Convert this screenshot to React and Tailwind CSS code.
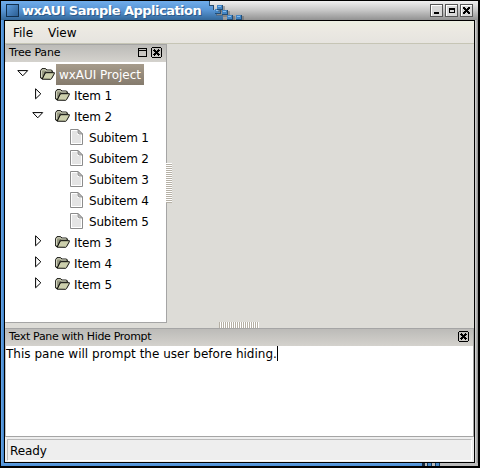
import React from "react";

const CloseIcon = () => (
  <svg width="11" height="11" viewBox="0 0 11 11" shapeRendering="crispEdges" className="block shrink-0">
    <path d="M1 0h9v1h1v9h-1v1H1v-1H0V1h1zM1 1v9h9V1z" fillRule="evenodd" />
    <path d="M2 3h1V2h1v1h1v1h1V3h1V2h1v1h1v1H8v1H7v1h1v1h1v1H8v1H7V8H6V7H5v1H4v1H3V8H2V7h1V6h1V5H3V4H2z" />
  </svg>
);

const MaxIcon = () => (
  <svg width="9" height="9" viewBox="0 0 9 9" shapeRendering="crispEdges" className="block shrink-0">
    <path d="M0 0h9v9H0zM1 3v5h7V3zM1 1v1h7V1z" fillRule="evenodd" />
  </svg>
);

const Folder = () => (
  <svg width="15" height="12" viewBox="0 0 15 12" className="block shrink-0">
    <path d="M.6 10V2.500L2 .6h3.500L7 2h4.500l1 1.200v1H5L2.500 11z" fill="#999b82" stroke="#1c1c18" />
    <path d="M1.500 9V3l1-1.200H5L6.500 3H11" fill="none" stroke="#e6e7d6" strokeWidth=".8" />
    <path d="M2.200 11.200L5 5.600l1-.9h8.400l-.2 1.200-2.700 4.800-.8.6z" fill="#cdd0ad" stroke="#11110e" />
  </svg>
);

const FileIcon = () => (
  <svg width="13" height="16" viewBox="0 0 13 16" className="block shrink-0">
    <path d="M.5.5H8L12.500 5v10.500H.5z" fill="#fff" stroke="#8c8c8c" />
    <path d="M2 2h5.500v4H11v8H2z" fill="#e4e4e4" />
    <path d="M8 .5L12.500 5H9.200L8 4z" fill="#bcbcbc" stroke="#858585" strokeWidth=".8" />
  </svg>
);

const Arrow = ({ open }) =>
  open ? (
    <svg width="12" height="8" viewBox="0 0 12 8" className="block">
      <path d="M.8 .6H10.700L5.750 5.800z" fill="#fff" stroke="#000" />
    </svg>
  ) : (
    <svg width="8" height="12" viewBox="0 0 8 12" className="block">
      <path d="M.6 .8V10.800L5.800 5.800z" fill="#fff" stroke="#000" />
    </svg>
  );

const Branch = ({ label, open, root }) => (
  <div className={`flex h-[21px] ${root ? "pl-3" : "pl-[27px]"}`}>
    <div className={`w-[23px] shrink-0 ${open ? "pt-[6px]" : "pt-[3px] pl-[3px]"}`}>
      <Arrow open={open} />
    </div>
    <div className="pt-[4px]">
      <Folder />
    </div>
    {root ? (
      <div className="ml-[1px] h-[21px] w-[88px] bg-linear-to-b from-[#a69b8b] to-[#857b6d] pl-[3px] leading-[23px] tracking-[-0.03px] text-white">
        {label}
      </div>
    ) : (
      <div className="pl-1 leading-[23px] tracking-[-0.15px]">{label}</div>
    )}
  </div>
);

const Leaf = ({ label }) => (
  <div className="flex h-[21px] items-start pl-[65px]">
    <div className="pt-[2px]"><FileIcon /></div>
    <span className="pl-[6px] leading-[23px] tracking-[-0.18px]">{label}</span>
  </div>
);

const WinButton = ({ children }) => (
  <div className="h-[13px] w-[13px] border border-[#555] bg-[#d8d8d8] shadow-[inset_1px_1px_0_#fff]">
    <svg width="11" height="11" viewBox="0 0 11 11" shapeRendering="crispEdges" className="block">
      {children}
    </svg>
  </div>
);

const pixels = [
  [65, 9], [67, 5], [72, 10], [77, 15], [86, 15],
];

export default function App() {
  return (
    <div className="flex h-[468px] w-[480px] flex-col overflow-hidden bg-black pt-px font-['DejaVu_Sans',sans-serif] text-[12px] whitespace-nowrap text-black">
      <div className="ml-px flex h-[19px] w-[477px] bg-linear-to-b from-[#f0f0f0] via-[#c6c6c6] to-[#929292]">
        <div className="flex h-[19px] w-[207px] items-center bg-linear-to-b from-[#70aceb] via-[#5794d3] to-[#346899] pl-[5px]">
          <div className="h-[13px] w-[13px] shrink-0 border border-[#12304e] bg-linear-to-br from-[#5c9bdc] to-[#2c5f93]" />
          <span className="pl-[3px] text-[13px] leading-[19px] font-bold tracking-[-0.52px] text-white [text-shadow:1px_1px_0_#2d5b8a]">
            wxAUI Sample Application
          </span>
        </div>
        <svg width="40" height="19" viewBox="58 1 40 19" shapeRendering="crispEdges" className="block">
          <defs>
            <linearGradient id="bar" x1="0" y1="1" x2="0" y2="20" gradientUnits="userSpaceOnUse">
              <stop offset="0" stopColor="#70aceb" />
              <stop offset=".5" stopColor="#5794d3" />
              <stop offset="1" stopColor="#346899" />
            </linearGradient>
          </defs>
          <path d="M58 1h2V5h4v5h3v5h6v5H58z" fill="url(#bar)" />
          <path d="M59.500 1V5.500h4V9.500" fill="none" stroke="#2a4d6e" />
          {pixels.map(([x, y]) => (
            <g key={`${x}-${y}`}>
              <rect x={x + 1} y={y + 1} width="7" height="6" fill="#555" opacity=".4" />
              <rect x={x} y={y} width="6" height="5" fill="#234f78" />
              <rect x={x} y={y} width="5" height="4" fill="#4385c4" />
              <rect x={x + 1} y={y + 1} width="3" height="1" fill="#86bdf0" />
            </g>
          ))}
        </svg>
        <div className="ml-auto flex items-start gap-[2px] pt-[3px] pr-[5px]">
          <WinButton><path d="M3 7h5v2H3z" /></WinButton>
          <WinButton><path d="M3 3h6v5H3zM4 5v2h4V5z" fillRule="evenodd" /></WinButton>
          <WinButton><path d="M2 2h2v1h1v1h1V3h1V2h2v2H8v1H7v1h1v1h1v2H7V8H6V7H5v1H4v1H2V7h1V6h1V5H3V4H2z" /></WinButton>
        </div>
      </div>

      <div className="flex h-[443px]">
        <div className="ml-px w-[3px] bg-linear-to-r from-[#6ba9e9] to-[#3d80c6]" />
        <div className="my-px ml-px flex w-[469px] flex-col bg-[#dddcd7]">
          <div className="flex h-[23px] gap-[15px] border-b border-[#c6c5b5] bg-linear-to-b from-[#edf0e2] via-[#ebe8e2] to-[#e6e4df] pl-2 leading-[25px]">
            <span>File</span>
            <span>View</span>
          </div>
          <div className="flex h-[279px]">
            <div className="flex w-[162px] flex-col border-r border-b border-l border-[#a5a5a5] border-l-[#c2c2c2]">
              <div className="flex h-[18px] items-start border-t border-[#a5a5a5] bg-linear-to-b from-[#bcbbb8] to-[#d4d2cd] pr-1 pl-[3px]">
                <span className="text-[11px] leading-[15px] tracking-[-0.2px]">Tree Pane</span>
                <div className="ml-auto flex items-center gap-1 pt-[2px]">
                  <MaxIcon />
                  <CloseIcon />
                </div>
              </div>
              <div className="-ml-px flex-1 bg-white pt-[2px]">
                <Branch root open label="wxAUI Project" />
                <Branch label="Item 1" />
                <Branch open label="Item 2" />
                <Leaf label="Subitem 1" />
                <Leaf label="Subitem 2" />
                <Leaf label="Subitem 3" />
                <Leaf label="Subitem 4" />
                <Leaf label="Subitem 5" />
                <Branch label="Item 3" />
                <Branch label="Item 4" />
                <Branch label="Item 5" />
              </div>
            </div>
            <div className="-ml-px mt-[119px] h-10 w-[6px] bg-[repeating-linear-gradient(to_bottom,#fff_0px,#fff_1px,#b5b0a5_1px,#b5b0a5_2px)]" />
          </div>
          <div className="flex h-[5px]">
            <div className="-mt-px ml-[214px] h-[6px] w-10 bg-[repeating-linear-gradient(to_right,#b5b0a5_0px,#b5b0a5_1px,#fff_1px,#fff_2px)]" />
          </div>
          <div className="flex h-[109px] flex-col border border-[#a5a5a5] border-l-[#c2c2c2]">
            <div className="flex h-[17px] shrink-0 items-start bg-linear-to-b from-[#bcbbb8] to-[#d4d2cd] pr-1 pl-[3px]">
              <span className="text-[11px] leading-[15px] tracking-[-0.33px]">Text Pane with Hide Prompt</span>
              <div className="ml-auto pt-[2px]"><CloseIcon /></div>
            </div>
            <div className="flex flex-1 items-start bg-white">
              <span className="leading-[16px] tracking-[0.02px]">This pane will prompt the user before hiding.</span>
              <span className="h-[15px] w-px bg-black" />
            </div>
          </div>
          <div className="flex h-[25px] bg-[#eee] pt-[2px] pr-[2px] pb-px pl-[2px]">
            <div className="w-full border border-[#bbb] border-r-white border-b-white pl-[2px] leading-[22px] tracking-[-0.1px]">Ready</div>
          </div>
        </div>
        <div className="ml-px w-[3px] bg-linear-to-r from-[#ddd] to-[#888]" />
      </div>
      <div className="ml-px flex h-[3px] w-[477px] bg-[#bbb]">
        <div className="w-[421px] bg-linear-to-b from-[#5e9cdd] to-[#4a8fd8]" />
        <div className="w-[3px] bg-[#182c40]" />
        <div className="ml-[2px] w-[5px] border-x border-[#173d61] bg-[#4a8bcb]" />
        <div className="ml-[3px] w-[5px] border-x border-[#173d61] bg-[#4a8bcb]" />
      </div>
    </div>
  );
}
